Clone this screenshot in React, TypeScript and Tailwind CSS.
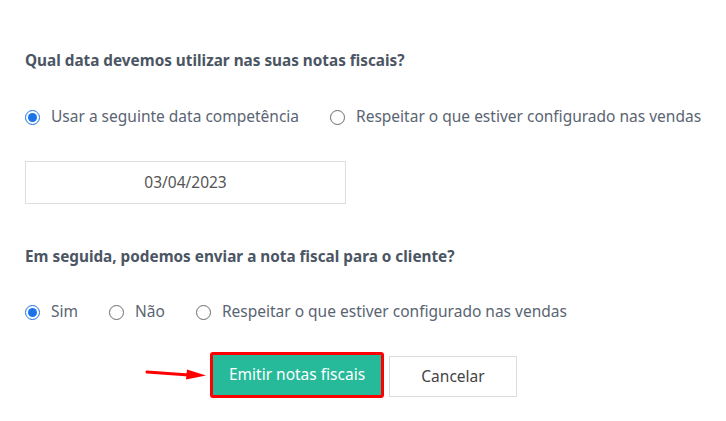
import React from "react";

const font = { fontFamily: '"Noto Sans", "Open Sans", Arial, sans-serif' };

function Radio({ checked, label }: { checked?: boolean; label: string }) {
  return (
    <label className="flex items-center gap-[11px] text-[15.5px] text-[#5a6472]">
      {checked ? (
        <span className="flex h-[15px] w-[15px] items-center justify-center rounded-full border-[1.5px] border-[#1a73e8]">
          <span className="h-[9px] w-[9px] rounded-full bg-[#1a73e8]" />
        </span>
      ) : (
        <span className="h-[15px] w-[15px] rounded-full border-[1.5px] border-[#6b6b6b]" />
      )}
      <span>{label}</span>
    </label>
  );
}

export default function App() {
  return (
    <div style={font} className="h-[421px] w-[726px] bg-white pl-[25px] pt-[49px]">
      <h2 className="text-[15.3px] font-bold leading-[22px] text-[#4b5563]">
        Qual data devemos utilizar nas suas notas fiscais?
      </h2>

      <div className="mt-[35px] flex h-[22px] items-center gap-[31px]">
        <Radio checked label="Usar a seguinte data competência" />
        <Radio label="Respeitar o que estiver configurado nas vendas" />
      </div>

      <div className="mt-[33px] flex h-[43px] w-[321px] items-center justify-center border border-[#dedede] text-[15.5px] text-[#555]">
        03/04/2023
      </div>

      <h2 className="mt-[41px] text-[15.3px] font-bold leading-[22px] text-[#4b5563]">
        Em seguida, podemos enviar a nota fiscal para o cliente?
      </h2>

      <div className="mt-[34px] flex h-[22px] items-center gap-[31px]">
        <Radio checked label="Sim" />
        <Radio label="Não" />
        <Radio label="Respeitar o que estiver configurado nas vendas" />
      </div>

      <div className="mt-[29px] flex items-start">
        <svg width="62" height="12" viewBox="0 0 62 12" className="ml-[120px] mr-[3px] mt-[17px]">
          <path d="M2 3 L44 6" stroke="#f00" strokeWidth="3" strokeLinecap="round" />
          <path d="M42 0.5 L61 6.5 L41 10.5 Z" fill="#f00" />
        </svg>
        <div className="rounded-[3px] border-[3px] border-[#f00]">
          <button className="flex h-[40px] w-[168px] items-center justify-center bg-[#26b99a] text-[15.5px] text-white">
            Emitir notas fiscais
          </button>
        </div>
        <button className="ml-[5px] mt-[4px] flex h-[41px] w-[128px] items-center justify-center border border-[#dcdcdc] bg-white text-[15.5px] text-[#444]">
          Cancelar
        </button>
      </div>
    </div>
  );
}
